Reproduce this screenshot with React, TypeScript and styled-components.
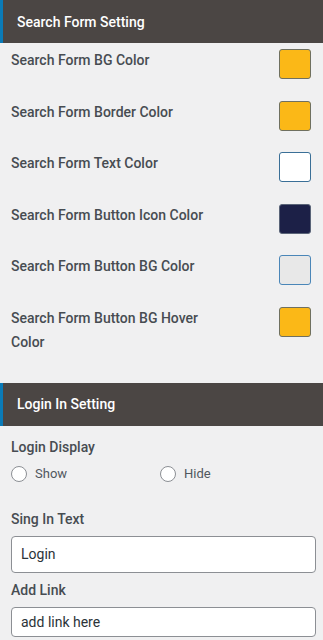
import styled, { createGlobalStyle } from 'styled-components';

const GlobalStyle = createGlobalStyle`
  html, body {
    margin: 0;
    padding: 0;
    background: #f0f0f1;
    font-family: Roboto, "Liberation Sans", Arial, sans-serif;
  }
`;

interface ColorOption {
  label: string,
  color: string,
  border: string,
};

const colorOptions: ColorOption[] = [
  { label: 'Search Form BG Color', color: '#fbb817', border: '#6f7060' },
  { label: 'Search Form Border Color', color: '#fbb817', border: '#6f7060' },
  { label: 'Search Form Text Color', color: '#ffffff', border: '#3a6f97' },
  { label: 'Search Form Button Icon Color', color: '#1c2047', border: '#5a6478' },
  { label: 'Search Form Button BG Color', color: '#e8e8e8', border: '#4a86b8' },
  { label: 'Search Form Button BG Hover Color', color: '#fbb817', border: '#6f7060' },
];

const Page = styled.div`
  width: 323px;
  min-height: 640px;
  background: #f0f0f1;
  overflow: hidden;
`;

const SectionHeader = styled.h2`
  margin: 0;
  height: 43px;
  display: flex;
  align-items: center;
  padding-left: 14px;
  background: #4b4644;
  border-left: 3px solid #0a7bb8;
  color: #ffffff;
  font-size: 14px;
  font-weight: 500;
`;

const ColorList = styled.div`
  padding: 5px 12px 8px 11px;
`;

const ColorRow = styled.div`
  display: flex;
  justify-content: space-between;
  align-items: flex-start;
  padding-bottom: 20.6px;
`;

const Label = styled.div`
  max-width: 215px;
  font-size: 14px;
  font-weight: 500;
  line-height: 24px;
  color: #474c52;
`;

const Swatch = styled.div<{ $color: string; $border: string }>`
  width: 32px;
  height: 30px;
  margin-top: 1px;
  box-sizing: border-box;
  border-radius: 3px;
  background: ${p => p.$color};
  border: 1px solid ${p => p.$border};
`;

const LoginBody = styled.div`
  padding: 9px 7px 0 11px;
`;

const RadioGroup = styled.div`
  display: grid;
  grid-template-columns: 149px 1fr;
  margin: 5px 0 23px;
  height: 20px;
`;

const RadioOption = styled.label`
  display: flex;
  align-items: center;
  gap: 8px;
  font-size: 13px;
  color: #50575e;
`;

const RadioCircle = styled.span`
  width: 16px;
  height: 16px;
  box-sizing: border-box;
  border-radius: 50%;
  border: 1px solid #8c8f94;
  background: #ffffff;
`;

const TextInput = styled.div<{ $height: number }>`
  height: ${p => p.$height}px;
  box-sizing: border-box;
  margin: 5px 0;
  padding: 0 9px;
  display: flex;
  align-items: center;
  background: #ffffff;
  border: 1px solid #8c8f94;
  border-radius: 4px;
  font-size: 14px;
  color: #2c3338;
`;

function App() {
  return (
    <Page>
      <GlobalStyle />
      <SectionHeader>Search Form Setting</SectionHeader>
      <ColorList>
        {colorOptions.map(opt => (
          <ColorRow key={opt.label}>
            <Label>{opt.label}</Label>
            <Swatch $color={opt.color} $border={opt.border} />
          </ColorRow>
        ))}
      </ColorList>
      <SectionHeader>Login In Setting</SectionHeader>
      <LoginBody>
        <Label>Login Display</Label>
        <RadioGroup>
          <RadioOption><RadioCircle />Show</RadioOption>
          <RadioOption><RadioCircle />Hide</RadioOption>
        </RadioGroup>
        <Label>Sing In Text</Label>
        <TextInput $height={37}>Login</TextInput>
        <Label>Add Link</Label>
        <TextInput $height={30}>add link here</TextInput>
      </LoginBody>
    </Page>
  );
}
export default App;
